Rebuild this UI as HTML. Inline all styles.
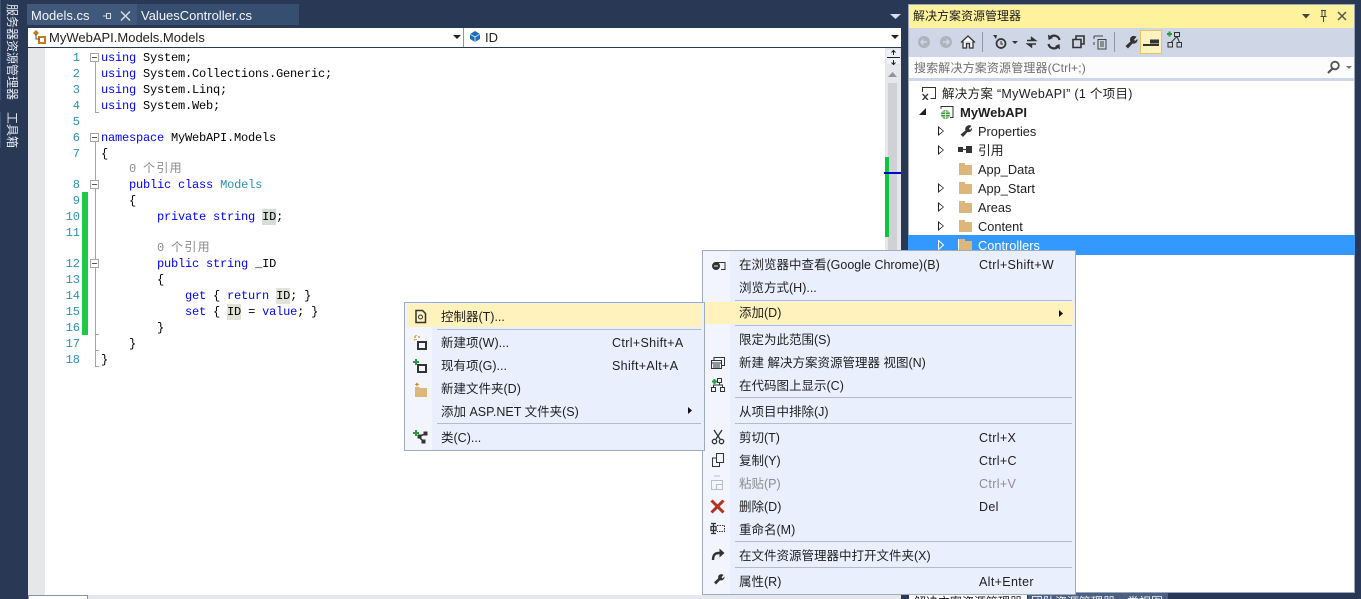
<!DOCTYPE html>
<html lang="zh"><head><meta charset="utf-8"><title>VS</title>
<style>
html,body{margin:0;padding:0;width:1361px;height:599px;overflow:hidden;background:#293955}
#r{position:absolute;left:0;top:0;width:1361px;height:599px;overflow:hidden;background:#293955;font:12.5px "Liberation Sans","Noto Sans CJK SC",sans-serif;color:#1e1e1e}
#r div,#r svg,span.t,span.c{position:absolute}
.t{white-space:nowrap;line-height:16px;height:16px}
.c{white-space:pre;font:12px/16px "Liberation Mono","WenQuanYi Zen Hei",monospace;letter-spacing:-.2px;left:101px;color:#000;height:16px;margin-top:1px}
.c b{font-weight:normal;color:#00f}
.c i{font-style:normal;color:#2b91af}
.c u{text-decoration:none;background:#e1e3d8;display:inline-block;height:16px;line-height:16px}
.c em{font-style:normal;letter-spacing:1.3px}
.n{position:absolute;white-space:pre;font:12px/16px "Liberation Mono",monospace;color:#2b91af;width:30px;left:50px;text-align:right;height:16px;margin-top:1px}
.r{color:#8a8a8a}
#r .sep{height:1px;background:#b3bbcc}
#r .fold{width:9px;height:9px;border:1px solid #a5a5a5;background:#fff;left:90px;box-sizing:border-box}
#r .fold:after{content:"";position:absolute;left:1px;top:3px;width:5px;height:1px;background:#555}
#r .vl{width:1px;background:#a5a5a5;left:95px}
#r .hl{height:1px;width:4px;background:#a5a5a5;left:95px}
.tr{left:978px;font-size:12.8px;margin-top:1px}
#r .fo{left:959px;width:13px;height:10px;background:#dcb67a}
#r .fo:before{content:"";position:absolute;left:0;top:-2px;width:6px;height:2px;background:#dcb67a}
#r .ar{left:938px;width:0;height:0;border-left:6px solid #1e1e1e;border-top:5px solid transparent;border-bottom:5px solid transparent}
#r .ar:after{content:"";position:absolute;left:-5px;top:-3px;width:0;height:0;border-left:4px solid #fff;border-top:3px solid transparent;border-bottom:3px solid transparent}
.m1{left:441px;margin-top:1px}.m2{left:739px;margin-top:1px}.s2{left:979px;letter-spacing:.35px;margin-top:1px}.s1{left:612px;letter-spacing:.35px;margin-top:1px}
</style></head><body><div id="r">

<!-- left sidebar -->
<div style="left:0;top:0;width:1px;height:100px;background:#3e5070"></div>
<div style="left:0;top:112px;width:1px;height:36px;background:#3e5070"></div>
<div style="left:4px;top:4px;width:16px;height:98px;writing-mode:vertical-rl;text-orientation:sideways;font-size:12px;line-height:16px;color:#e8ecf4;white-space:nowrap">服务器资源管理器</div>
<div style="left:4px;top:112px;width:16px;height:40px;writing-mode:vertical-rl;text-orientation:sideways;font-size:12px;line-height:16px;color:#e8ecf4;white-space:nowrap">工具箱</div>

<!-- tabs -->
<div style="left:27px;top:4px;width:110px;height:21px;background:#40587a"></div>
<div style="left:137px;top:4px;width:162px;height:21px;background:#364e6f"></div>
<span class="t" style="left:31px;top:8px;color:#f4f6fa;font-size:13px">Models.cs</span>
<span class="t" style="left:141px;top:8px;color:#f4f6fa;font-size:13px">ValuesController.cs</span>
<svg style="left:101px;top:10px" width="30" height="12" viewBox="0 0 30 12" fill="none" stroke="#d5dbe6"><path d="M2 6h3M5.500 3v6M5.500 3.500h3.500M5.500 8.500h3.500M9.500 3v6"/><path d="M20 1.500l9 9M29 1.500l-9 9" stroke-width="1.500"/></svg>
<svg style="left:890px;top:13px" width="12" height="7"><path d="M0 1h11L5.500 6z" fill="#d8dee9"/></svg>

<!-- nav bar -->
<div style="left:28px;top:28px;width:873px;height:19px;background:#fff"></div>
<div style="left:463px;top:28px;width:1px;height:19px;background:#8b97ab"></div>
<svg style="left:32px;top:30px" width="15" height="14"><path d="M1 3l3-3 3 3-3 3z" fill="#c27d1a"/><path d="M7 7h6v6H7z" fill="none" stroke="#c27d1a" stroke-width="2"/><path d="M4 4v5h4" fill="none" stroke="#555"/></svg>
<span class="t" style="left:49px;top:30px;font-size:13px">MyWebAPI.Models.Models</span>
<svg style="left:453px;top:35px" width="9" height="5"><path d="M0 0h8L4 4z" fill="#222"/></svg>
<svg style="left:469px;top:30px" width="13" height="13"><path d="M1 4l5-3 5 3v5l-5 3-5-3z" fill="#1c6fb5"/><path d="M6 6v6M1 4l5 3 5-3" stroke="#bcd8ee" fill="none"/></svg>
<span class="t" style="left:485px;top:30px;font-size:13px">ID</span>
<svg style="left:891px;top:35px" width="9" height="5"><path d="M0 0h8L4 4z" fill="#222"/></svg>

<!-- editor -->
<div style="left:28px;top:48px;width:873px;height:547px;background:#fff"></div>
<div style="left:28px;top:48px;width:17px;height:547px;background:#e6e7e8"></div>
<div style="left:28px;top:595px;width:873px;height:4px;background:#e6e7ed"></div>
<div style="left:28px;top:595px;width:58px;height:4px;background:#fff;border:1px solid #8a92a6;border-bottom:0"></div>

<!-- change bar -->
<div style="left:82px;top:192px;width:6px;height:143px;background:#1fc845"></div>

<!-- outlining -->
<div class="fold" style="top:53px"></div>
<div class="vl" style="top:62px;height:51px"></div><div class="hl" style="top:112px"></div>
<div class="fold" style="top:133px"></div>
<div class="vl" style="top:142px;height:38px"></div>
<div class="fold" style="top:180px"></div>
<div class="vl" style="top:189px;height:70px"></div>
<div class="fold" style="top:259px"></div>
<div class="vl" style="top:268px;height:99px"></div>
<div class="hl" style="top:334px"></div><div class="hl" style="top:350px"></div><div class="hl" style="top:366px"></div>

<!-- line numbers -->
<span class="n" style="top:49px">1</span><span class="n" style="top:65px">2</span><span class="n" style="top:81px">3</span><span class="n" style="top:97px">4</span><span class="n" style="top:113px">5</span><span class="n" style="top:129px">6</span><span class="n" style="top:145px">7</span><span class="n" style="top:176px">8</span><span class="n" style="top:192px">9</span><span class="n" style="top:208px">10</span><span class="n" style="top:224px">11</span><span class="n" style="top:255px">12</span><span class="n" style="top:271px">13</span><span class="n" style="top:287px">14</span><span class="n" style="top:303px">15</span><span class="n" style="top:319px">16</span><span class="n" style="top:335px">17</span><span class="n" style="top:351px">18</span>

<!-- code -->
<span class="c" style="top:49px"><b>using</b> System;</span>
<span class="c" style="top:65px"><b>using</b> System.Collections.Generic;</span>
<span class="c" style="top:81px"><b>using</b> System.Linq;</span>
<span class="c" style="top:97px"><b>using</b> System.Web;</span>
<span class="c" style="top:129px"><b>namespace</b> MyWebAPI.Models</span>
<span class="c" style="top:145px">{</span>
<span class="c r" style="top:160px">    0 <em>个引用</em></span>
<span class="c" style="top:176px">    <b>public</b> <b>class</b> <i>Models</i></span>
<span class="c" style="top:192px">    {</span>
<span class="c" style="top:208px">        <b>private</b> <b>string</b> <u style="background:#d6dcd6">ID</u>;</span>
<span class="c r" style="top:239px">        0 <em>个引用</em></span>
<span class="c" style="top:255px">        <b>public</b> <b>string</b> _ID</span>
<span class="c" style="top:271px">        {</span>
<span class="c" style="top:287px">            <b>get</b> { <b>return</b> <u>ID</u>; }</span>
<span class="c" style="top:303px">            <b>set</b> { <u>ID</u> = <b>value</b>; }</span>
<span class="c" style="top:319px">        }</span>
<span class="c" style="top:335px">    }</span>
<span class="c" style="top:351px">}</span>

<!-- scrollbar -->
<div style="left:885px;top:48px;width:16px;height:547px;background:#e6e7ed"></div>
<div style="left:885px;top:49px;width:16px;height:16px;background:#eef1f8;box-sizing:border-box;border:1px solid #dfe3ec"></div>
<svg style="left:885px;top:49px" width="16" height="17" fill="none" stroke="#222"><path d="M2 8.500h13M8.500 1v5M8.500 11v5"/><path d="M6.500 3.500L8.500 1.500 10.500 3.500M6.500 13.500L8.500 15.500 10.500 13.500"/></svg>
<svg style="left:888px;top:72px" width="10" height="6"><path d="M0 5h9L4.500 0z" fill="#8d93a3"/></svg>
<div style="left:888px;top:83px;width:9px;height:512px;background:#d0d1d7"></div>
<div style="left:885px;top:157px;width:4px;height:80px;background:#10c440"></div>
<div style="left:884px;top:172px;width:17px;height:2px;background:#0000c8"></div>

<!-- solution explorer -->
<div style="left:908px;top:4px;width:447px;height:589px;background:#fff;border:1px solid #9aa7bb;box-sizing:border-box"></div>
<div style="left:909px;top:5px;width:445px;height:23px;background:#fff29d"></div>
<span class="t" style="left:913px;top:8px;font-size:12px;color:#1b1b1b">解决方案资源管理器</span>
<svg style="left:1302px;top:9px" width="50" height="14" fill="none" stroke="#444"><path d="M0 5h8L4 9.500z" fill="#444" stroke="none"/><path d="M19 1.500h5M20 1.500v6h3v-6M18.500 7.500h6M21.500 8v5" /><path d="M36 3l8 8M44 3l-8 8" stroke-width="1.500" stroke="#555"/></svg>

<div style="left:909px;top:28px;width:445px;height:28px;background:#cfd6e5"></div>
<!-- toolbar icons -->
<svg style="left:909px;top:28px" width="445" height="28">
<circle cx="15" cy="14" r="6" fill="#aeb3bd"/><path d="M18 14h-6M14.500 11.500L12 14l2.500 2.500" stroke="#cfd6e5" fill="none" stroke-width="1.500"/>
<circle cx="37" cy="14" r="6" fill="#aeb3bd"/><path d="M34 14h6M37.500 11.500L40 14l-2.500 2.500" stroke="#cfd6e5" fill="none" stroke-width="1.500"/>
<path d="M52 14.500l7-6.500 7 6.500M54 13.500v6.500h3.500v-4.500h3v4.500h3.500v-6.500" fill="#fff" stroke="#333" stroke-width="1.300"/>
<rect x="73" y="4" width="1" height="20" fill="#8f98aa"/>
<circle cx="92" cy="15.500" r="4.500" fill="none" stroke="#333" stroke-width="1.700"/><path d="M92 13v3h2" stroke="#333" fill="none"/><path d="M84 7h4l-1 4z" fill="#333"/>
<path d="M103 13h6l-3 3z" fill="#333"/>
<path d="M118 12.500h7M122.500 9.500l4 3h-4zM127 16h-7M122.500 19l-4-3h4z" stroke="#333" stroke-width="1.400" fill="#333"/>
<path d="M150.500 12a5.500 5.500 0 0 0-9.500-2.500M139.500 16a5.500 5.500 0 0 0 9.500 2.500" stroke="#333" stroke-width="2.200" fill="none"/><path d="M139 6.500l.5 5.500 4.500-2zM151 21.500l-.5-5.500-4.500 2z" fill="#333"/>
<path d="M164 11.500h8v8h-8zM167 11V8h8v8h-3" fill="none" stroke="#333" stroke-width="1.600"/>
<path d="M185 8h9M185 8v3M185 14v3M189 11.500h8v9.500h-8zM191 14h4M191 16h4M191 18h4" fill="none" stroke="#444"/>
<rect x="205" y="4" width="1" height="20" fill="#8f98aa"/>
<path d="M222 9a4 4 0 0 1 5.500 0l-2.500 2.500 1 1.500 2.500-2a4 4 0 0 1-5 4.500l-4.500 5-2.500-2.500 5-4.500a4 4 0 0 1 .5-4.500z" fill="#333"/>
<rect x="231.500" y="2.500" width="21" height="23" fill="#fff2bd" stroke="#e5c365"/>
<path d="M234 16h16v2h-16zM241 11.500h9v4h-9z" fill="#333"/>
<path d="M258 6h5M260.500 3.500v5" stroke="#2a9a3a" stroke-width="2" fill="none"/><path d="M265.500 4.500h5v4h-5zM259 14.500h4.500v4.500H259zM268 14.500h4.500v4.500H268zM268 8.500l-6 6M268 8.500l2.500 6" fill="none" stroke="#333"/>
</svg>

<div style="left:909px;top:56px;width:445px;height:22px;background:#fcfcfd;border-top:1px solid #cfd6e5;box-sizing:border-box"></div>
<div style="left:909px;top:78px;width:445px;height:3px;background:#cfd6e5"></div>
<span class="t" style="left:914px;top:60px;color:#707070;font-size:12px;letter-spacing:.15px">搜索解决方案资源管理器(Ctrl+;)</span>
<svg style="left:1325px;top:60px" width="28" height="15"><circle cx="10" cy="5.500" r="3.800" fill="none" stroke="#555" stroke-width="1.800"/><path d="M7.500 8.500L3 13" stroke="#555" stroke-width="2.200"/><path d="M21 6h6l-3 3z" fill="#777"/></svg>

<!-- tree -->
<svg style="left:921px;top:86px" width="16" height="14" fill="none" stroke="#333"><path d="M1.500 6V1.500h13v11h-5"/><path d="M1.500 8l3 3-3 3M7 8l-3 3 3 3" stroke-width="1.300"/></svg>
<span class="t" style="left:942px;top:86px;font-size:12.500px;letter-spacing:.3px">解决方案 “MyWebAPI” (1 个项目)</span>
<svg style="left:919px;top:108px" width="8" height="8"><path d="M7 0v7H0z" fill="#1e1e1e"/></svg>
<svg style="left:939px;top:105px" width="16" height="15"><path d="M2 4V1.500h12v11h-3" fill="none" stroke="#333"/><circle cx="6.500" cy="9.500" r="4.500" fill="#3c9a3c"/><path d="M2 9.500h9M6.500 5v9M3 7h7M3 12h7" stroke="#fff" stroke-width=".7"/></svg>
<span class="t" style="left:960px;top:105px;font-weight:bold;font-size:13px">MyWebAPI</span>
<div class="ar" style="top:126px"></div>
<svg style="left:959px;top:125px" width="14" height="13"><path d="M8 1a3.500 3.500 0 0 1 4.500 0L10 3.500l1 1.500 2-2a3.500 3.500 0 0 1-4.500 4l-4.500 5L1.500 9.500l5-4a3.500 3.500 0 0 1 1.500-4.500z" fill="#333"/></svg>
<span class="t tr" style="top:123px">Properties</span>
<div class="ar" style="top:145px"></div>
<svg style="left:958px;top:145px" width="14" height="10"><path d="M0 2h5v5H0zM8 1h6v7H8z" fill="#333"/><path d="M5 4.500h3" stroke="#333"/></svg>
<span class="t tr" style="top:142px">引用</span>
<div class="fo" style="top:165px"></div>
<span class="t tr" style="top:161px">App_Data</span>
<div class="ar" style="top:183px"></div><div class="fo" style="top:184px"></div>
<span class="t tr" style="top:180px">App_Start</span>
<div class="ar" style="top:202px"></div><div class="fo" style="top:203px"></div>
<span class="t tr" style="top:199px">Areas</span>
<div class="ar" style="top:221px"></div><div class="fo" style="top:222px"></div>
<span class="t tr" style="top:218px">Content</span>
<div style="left:908px;top:235px;width:447px;height:20px;background:#3399ff"></div>
<svg style="left:938px;top:240px" width="7" height="10"><path d="M.5.500l5 4.500-5 4.500z" fill="#3399ff" stroke="#fff"/></svg>
<div class="fo" style="top:241px"></div>
<div style="left:958px;top:239px;width:1px;height:12px;background:#fff"></div>
<span class="t tr" style="top:237px;color:#fff">Controllers</span>

<!-- bottom tabs -->
<div style="left:1028px;top:593px;width:140px;height:6px;background:#4b5f80"></div>
<div style="left:909px;top:595px;width:118px;height:4px;background:#fff"></div>
<span class="t" style="left:914px;top:594px;font-size:12px;color:#111">解决方案资源管理器</span>
<span class="t" style="left:1031px;top:594px;font-size:12px;color:#f0f2f7">团队资源管理器</span>
<span class="t" style="left:1127px;top:594px;font-size:12px;color:#f0f2f7">类视图</span>

<!-- right context menu -->
<div style="left:702px;top:250px;width:374px;height:345px;background:#e9effd;border:1px solid #a0abc0;box-sizing:border-box"></div>
<div style="left:703px;top:251px;width:27px;height:343px;background:#f2f5fe"></div>
<div class="sep" style="left:735px;top:300px;width:337px"></div>
<div style="left:705px;top:302px;width:368px;height:22px;background:#fff2bd"></div>
<div class="sep" style="left:735px;top:325px;width:337px"></div>
<div class="sep" style="left:735px;top:397px;width:337px"></div>
<div class="sep" style="left:735px;top:423px;width:337px"></div>
<div class="sep" style="left:735px;top:541px;width:337px"></div>
<div class="sep" style="left:735px;top:567px;width:337px"></div>

<span class="t m2" style="top:256px">在浏览器中查看(Google Chrome)(B)</span><span class="t s2" style="top:256px">Ctrl+Shift+W</span>
<span class="t m2" style="top:279px">浏览方式(H)...</span>
<span class="t m2" style="top:304px">添加(D)</span>
<svg style="left:1059px;top:310px" width="6" height="8"><path d="M0 0l4 3.500L0 7z" fill="#111"/></svg>
<span class="t m2" style="top:331px">限定为此范围(S)</span>
<span class="t m2" style="top:354px">新建 解决方案资源管理器 视图(N)</span>
<span class="t m2" style="top:377px">在代码图上显示(C)</span>
<span class="t m2" style="top:403px">从项目中排除(J)</span>
<span class="t m2" style="top:429px">剪切(T)</span><span class="t s2" style="top:429px">Ctrl+X</span>
<span class="t m2" style="top:452px">复制(Y)</span><span class="t s2" style="top:452px">Ctrl+C</span>
<span class="t m2" style="top:475px;color:#8d8d8d">粘贴(P)</span><span class="t s2" style="top:475px;color:#8d8d8d">Ctrl+V</span>
<span class="t m2" style="top:498px">删除(D)</span><span class="t s2" style="top:498px">Del</span>
<span class="t m2" style="top:521px">重命名(M)</span>
<span class="t m2" style="top:547px">在文件资源管理器中打开文件夹(X)</span>
<span class="t m2" style="top:573px">属性(R)</span><span class="t s2" style="top:573px">Alt+Enter</span>

<!-- left context menu -->
<div style="left:404px;top:302px;width:301px;height:149px;background:#e9effd;border:1px solid #a0abc0;box-sizing:border-box"></div>
<div style="left:405px;top:303px;width:27px;height:147px;background:#f2f5fe"></div>
<div style="left:407px;top:304px;width:295px;height:23px;background:#fff2bd"></div>
<div class="sep" style="left:437px;top:329px;width:264px"></div>
<div class="sep" style="left:437px;top:423px;width:264px"></div>

<span class="t m1" style="top:308px">控制器(T)...</span>
<span class="t m1" style="top:334px">新建项(W)...</span><span class="t s1" style="top:334px">Ctrl+Shift+A</span>
<span class="t m1" style="top:357px">现有项(G)...</span><span class="t s1" style="top:357px">Shift+Alt+A</span>
<span class="t m1" style="top:380px">新建文件夹(D)</span>
<span class="t m1" style="top:403px">添加 ASP.NET 文件夹(S)</span>
<svg style="left:688px;top:407px" width="6" height="8"><path d="M0 0l4 3.500L0 7z" fill="#111"/></svg>
<span class="t m1" style="top:429px">类(C)...</span>

<!-- menu icons: page coordinates -->
<svg style="left:0;top:0" width="1361" height="599" fill="none" stroke="#333">
<!-- menu 2 -->
<path d="M715 262.500h10v7h-4"/><circle cx="716" cy="266" r="3.500" fill="#333"/><path d="M714 266h4" stroke="#e9effd"/>
<path d="M711.500 360.500h10v8h-10zM711.500 363h10M713 365h7M713 367h7M714 360v-2.500h10.500v8h-3" />
<path d="M712 381.500h5M714.500 379v5" stroke="#2a9a3a" stroke-width="2"/>
<path d="M717.500 378.500h4v4h-4zM711.500 387.500h4v4h-4zM720.500 387.500h4v4h-4zM719.500 382.500v2.500h-6v2.500M719.500 385h3v2.500"/>
<path d="M714 430l6 9M722 430l-6 9" stroke-width="1.300"/><circle cx="714.500" cy="441.500" r="2.200" stroke-width="1.300"/><circle cx="721.500" cy="441.500" r="2.200" stroke-width="1.300"/>
<path d="M716.500 453.500h7v9h-7zM716 458h-3.500v8.500h7v-4"/>
<path d="M714 476h6M711.500 480.500h11v9h-11zM716.500 484.500h6v5h-6z" stroke="#b8bec9"/>
<path d="M711.500 500.500l12 12M723.500 500.500l-12 12" stroke="#b5331f" stroke-width="3"/>
<path d="M711 523.500h5M711 533.500h5M713.500 523.500v10M711 526.500h5v4h-5z" stroke-width="1.300"/><path d="M717 525.500h7.500v6H717" stroke-dasharray="1.500 1"/>
<path d="M713 560c0-5 2-7 6-7h2" stroke-width="2.400"/><path d="M719.500 548.500l5 4.500-5 4.500z" fill="#333" stroke="none"/>
<path d="M719 575a3.500 3.500 0 0 1 4.500 0l-2 2.200 1 1.300 2-2a3.500 3.500 0 0 1-4.500 3.800l-4 4.200-2-2.200 4.300-4a3.500 3.500 0 0 1 .7-3.300z" fill="#333" stroke="none"/>
<!-- menu 1 -->
<path d="M416 310.500h6.500l3 3v9H416z" stroke-width="1.500"/><circle cx="420.500" cy="317" r="2"/>
<path d="M414 337h2M418 337h2M416 335v1M416 339v1M414 340h1" stroke="#d08a1a" stroke-width="1.300"/>
<rect x="418" y="342" width="8" height="7" stroke-width="2"/>
<path d="M413 362h6M416 359v6" stroke="#2a9a3a" stroke-width="2"/>
<rect x="418" y="365" width="8" height="7" stroke-width="2"/>
<path d="M417 382l.8 1.800 1.800.5-1.800.8-.8 1.800-.8-1.800-1.800-.8 1.800-.5z" fill="#d08a1a" stroke="none"/>
<path d="M415 387h4l1 1h7v9h-12z" fill="#dcb67a" stroke="none"/>
<path d="M413 433h6M416 430v6" stroke="#2a9a3a" stroke-width="2"/>
<path d="M420 436l5-2M420 438l3 3" stroke-width="1.500"/><path d="M418 435h3v3h-3zM424 432h3v3h-3zM422 440h3v3h-3z" fill="#333"/>
</svg>

</div></body></html>
